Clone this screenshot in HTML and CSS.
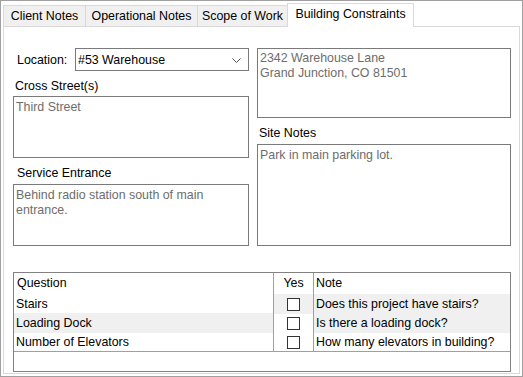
FILE: index.html
```html
<!DOCTYPE html>
<html>
<head>
<meta charset="utf-8">
<link rel="stylesheet" href="styles.css">
</head>
<body>
<div class="window">
  <div class="tabs">
    <div class="tab t1">Client Notes</div>
    <div class="tab t2">Operational Notes</div>
    <div class="tab t3">Scope of Work</div>
    <div class="tab active">Building Constraints</div>
  </div>
  <div class="panel">
    <div class="cols">
      <div class="col left">
        <div class="loc-row">
          <span class="loc-label">Location:</span>
          <div class="select">
            <span>#53 Warehouse</span>
            <svg class="chev" width="9" height="5" viewBox="0 0 9 5"><path d="M0.5 0.5 L4.5 4.5 L8.5 0.5" fill="none" stroke="#555" stroke-width="1"/></svg>
          </div>
        </div>
        <div class="label lbl-cross">Cross Street(s)</div>
        <div class="box small">Third Street</div>
        <div class="label lbl-service">Service Entrance</div>
        <div class="box small">Behind radio station south of main entrance.</div>
      </div>
      <div class="col right">
        <div class="box addr">2342 Warehouse Lane<br>Grand Junction, CO 81501</div>
        <div class="label lbl-site">Site Notes</div>
        <div class="box site">Park in main parking lot.</div>
      </div>
    </div>
    <div class="grid">
      <div class="row head">
        <div class="c q">Question</div>
        <div class="c y">Yes</div>
        <div class="c n">Note</div>
      </div>
      <div class="row">
        <div class="c q">Stairs</div>
        <div class="c y shade"><span class="cb"></span></div>
        <div class="c n shade">Does this project have stairs?</div>
      </div>
      <div class="row">
        <div class="c q shade">Loading Dock</div>
        <div class="c y"><span class="cb"></span></div>
        <div class="c n shade">Is there a loading dock?</div>
      </div>
      <div class="row last">
        <div class="c q">Number of Elevators</div>
        <div class="c y"><span class="cb"></span></div>
        <div class="c n">How many elevators in building?</div>
      </div>
    </div>
  </div>
</div>
</body>
</html>
```

FILE: styles.css
```css
* { box-sizing: border-box; }
html, body { margin: 0; padding: 0; background: #fff; }
body {
  font-family: "Liberation Sans", Arial, sans-serif;
  font-size: 12.4px;
  color: #000;
}
.window {
  width: 523px;
  height: 377px;
  border: 1px solid #a0a0a0;
  padding: 2px 2px 2px 2px;
  display: flex;
  flex-direction: column;
  background: #fff;
}
.tabs {
  display: flex;
  align-items: flex-end;
  height: 23px;
  position: relative;
  z-index: 2;
}
.tab {
  height: 21px;
  line-height: 21px;
  text-align: center;
  background: #f0f0f0;
  border-top: 1px solid #d9d9d9;
  border-left: 1px solid #d9d9d9;
  color: #000;
  white-space: nowrap;
}
.t1 { width: 82px; }
.t2 { width: 112px; }
.t3 { width: 90px; }
.tab.active {
  width: 127px;
  height: 24px;
  margin-bottom: -1px;
  line-height: 21px;
  background: #fff;
  border-right: 1px solid #d9d9d9;
}
.panel {
  flex: 1;
  border: 1px solid #d9d9d9;
  padding: 21px 8px 0 9px;
  display: flex;
  flex-direction: column;
}
.cols {
  display: grid;
  grid-template-columns: 236px 254px;
  column-gap: 8px;
}
.col { display: flex; flex-direction: column; }
.loc-row {
  display: flex;
  align-items: center;
  height: 23px;
}
.loc-label { width: 62px; padding-left: 4px; }
.select {
  flex: 1;
  height: 23px;
  border: 1px solid #7a7a7a;
  display: flex;
  align-items: center;
  justify-content: space-between;
  padding: 0 7px 0 2px;
}
.chev { display: block; margin-top: 1px; }
.label {
  height: 26px;
  padding-top: 8px;
  line-height: 15px;
}
.lbl-cross { padding-left: 2px; height: 25px; }
.lbl-service { padding-left: 4px; padding-top: 8px; }
.lbl-site { padding-left: 2px; }
.box {
  border: 1px solid #7a7a7a;
  padding: 3px 3px 2px 2px;
  line-height: 15px;
  color: #6d6d6d;
  background: #fff;
}
.small { height: 62px; }
.addr { height: 70px; padding-top: 2px; }
.site { height: 102px; }
.grid {
  margin-top: 26px;
  width: 498px;
  height: 100px;
  border: 1px solid #828282;
}
.row {
  display: grid;
  grid-template-columns: 259px 41px 1fr;
  height: 19px;
}
.row.head { height: 21px; }
.row.last { border-bottom: 1px solid #a0a0a0; height: 20px; }
.c {
  line-height: 19px;
  padding-left: 2px;
  padding-top: 1px;
  white-space: nowrap;
}
.head .c { line-height: 21px; padding-top: 0; }
.head .q { padding-left: 3px; }
.y {
  border-left: 1px solid #a0a0a0;
  border-right: 1px solid #a0a0a0;
  display: flex;
  align-items: center;
  justify-content: center;
  padding-left: 0;
  padding-top: 0;
}
.shade { background: #f0f0f0; }
.cb {
  width: 13px;
  height: 13px;
  border: 1px solid #333;
  background: #fff;
}
```
